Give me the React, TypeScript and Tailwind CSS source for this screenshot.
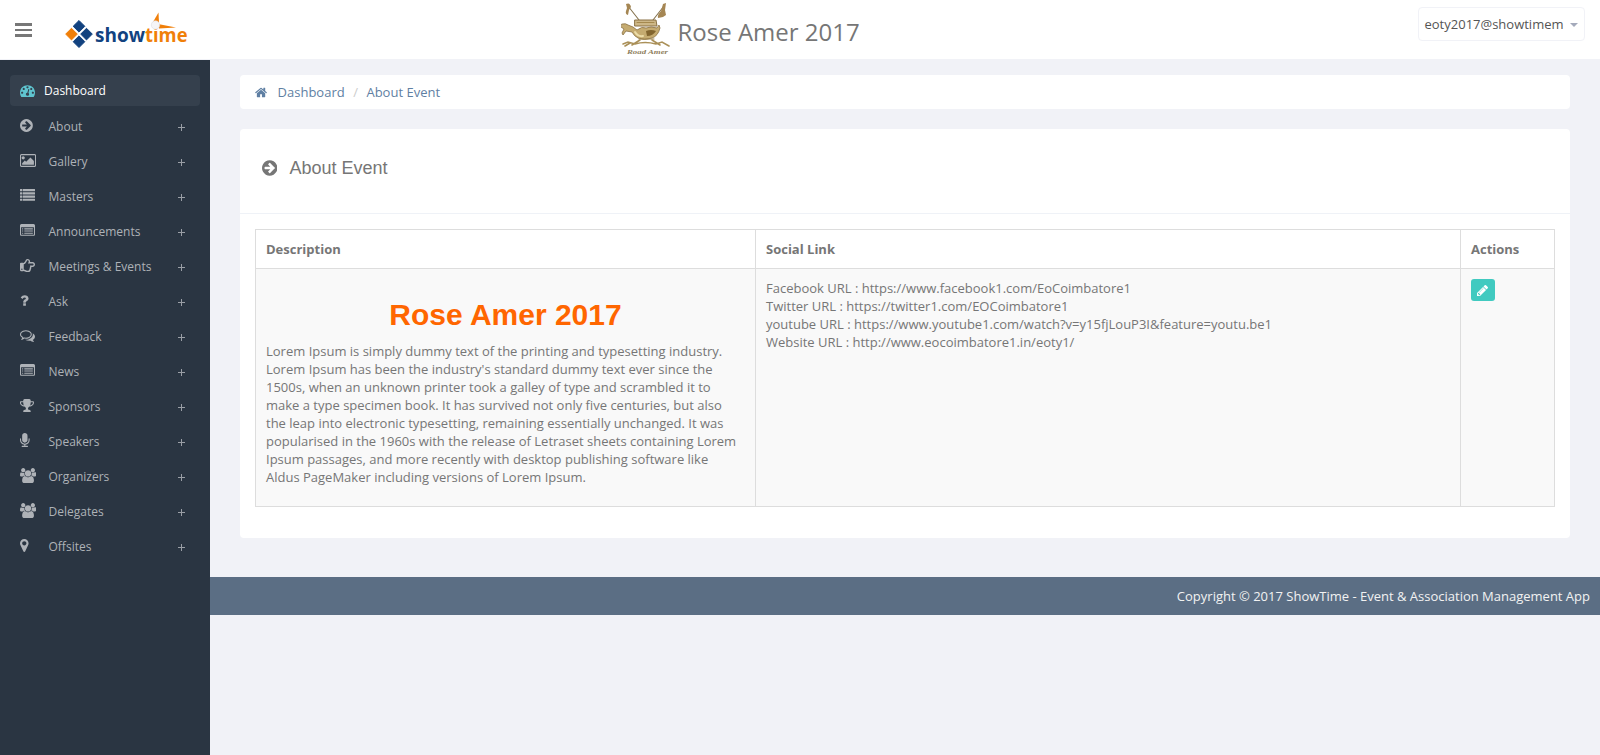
import React from "react";
import { FaRegHandPointRight } from "react-icons/fa";

type Glyph = { box: string; d: string };

const listBar = (y: number) =>
  `M0 ${y + 32}q0-32 32-32h192q32 0 32 32v192q0 32-32 32h-192q-32 0-32-32zM320 ${y + 32}q0-32 32-32h1408q32 0 32 32v192q0 32-32 32h-1408q-32 0-32-32z`;
const altBar = (y: number) => `M256 ${y}h128v128h-128zM512 ${y}h1024v128h-1024z`;

const glyphs: Record<string, Glyph> = {
  dash: { box: "0 0 1792 1792", d: "M384 1152q0-53-37.5-90.5t-90.5-37.5-90.5 37.5-37.5 90.5 37.5 90.5 90.5 37.5 90.5-37.5 37.5-90.5zm192-448q0-53-37.5-90.5t-90.5-37.5-90.5 37.5-37.5 90.5 37.5 90.5 90.5 37.5 90.5-37.5 37.5-90.5zm428 481l101-382q6-26-7.5-48.5t-38.5-29.5-48 6.5-30 39.5l-101 382q-60 5-107 43.5t-63 98.5q-20 77 20 146t117 89 146-20 89-117q16-60-6-117t-72-91zm660-33q0-53-37.5-90.5t-90.5-37.5-90.5 37.5-37.5 90.5 37.5 90.5 90.5 37.5 90.5-37.5 37.5-90.5zm-640-640q0-53-37.5-90.5t-90.5-37.5-90.5 37.5-37.5 90.5 37.5 90.5 90.5 37.5 90.5-37.5 37.5-90.5zm448 192q0-53-37.5-90.5t-90.5-37.5-90.5 37.5-37.5 90.5 37.5 90.5 90.5 37.5 90.5-37.5 37.5-90.5zm320 448q0 261-141 483-19 29-54 29h-1402q-35 0-54-29-141-221-141-483 0-182 71-348t191-286 286-191 348-71 348 71 286 191 191 286 71 348z" },
  arrow: { box: "128 0 1536 1792", d: "M1413 896q0-27-18-45l-91-91-362-362q-18-18-45-18t-45 18l-91 91q-18 18-18 45t18 45l189 189h-502q-26 0-45 19t-19 45v128q0 26 19 45t45 19h502l-189 189q-19 19-19 45t19 45l91 91q18 18 45 18t45-18l362-362 91-91q18-18 18-45zm251 0q0 209-103 385.5t-279.5 279.5-385.5 103-385.5-103-279.5-279.5-103-385.5 103-385.5 279.5-279.5 385.5-103 385.5 103 279.5 279.5 103 385.5z" },
  image: { box: "0 0 1920 1792", d: "M576 576q0 80-56 136t-136 56-136-56-56-136 56-136 136-56 136 56 56 136zm1088 384v448h-1408v-192l320-320 160 160 512-512zm96-704h-1600q-13 0-22.5 9.5t-9.5 22.5v1216q0 13 9.5 22.5t22.5 9.5h1600q13 0 22.5-9.5t9.5-22.5v-1216q0-13-9.5-22.5t-22.5-9.5zm160 32v1216q0 66-47 113t-113 47h-1600q-66 0-113-47t-47-113v-1216q0-66 47-113t113-47h1600q66 0 113 47t47 113z" },
  list: { box: "0 0 1792 1792", d: listBar(128) + listBar(512) + listBar(896) + listBar(1280) },
  listAlt: { box: "0 0 1792 1792", d: altBar(640) + altBar(896) + altBar(1152) + "M1664 1376v-832q0-13-9.5-22.5t-22.5-9.5h-1472q-13 0-22.5 9.5t-9.5 22.5v832q0 13 9.5 22.5t22.5 9.5h1472q13 0 22.5-9.5t9.5-22.5zm128-1088v1088q0 66-47 113t-113 47h-1472q-66 0-113-47t-47-113v-1088q0-66 47-113t113-47h1472q66 0 113 47t47 113z" },
  question: { box: "384 0 1024 1792", d: "M1088 1256v240q0 16-12 28t-28 12h-240q-16 0-28-12t-12-28v-240q0-16 12-28t28-12h240q16 0 28 12t12 28zm316-600q0 54-15.5 101t-35 76.5-55 59.5-57.5 43.5-61 35.5q-41 23-68.5 65t-27.5 67q0 17-12 32.5t-28 15.5h-240q-15 0-25.5-18.5t-10.5-37.5v-45q0-83 65-156.5t143-108.5q59-27 84-56t25-76q0-42-46.5-74t-107.5-32q-65 0-108 29-35 25-107 115-13 16-31 16-12 0-25-8l-164-125q-13-10-15.5-25t5.5-28q160-266 464-266 80 0 161 31t146 83 106 127.5 41 158.5z" },
  comments: { box: "0 0 1792 1792", d: "M704 384q-153 0-286 52t-211.5 141-78.5 191q0 82 53 158t149 132l97 56-35 84q34-20 62-39l44-31 53 10q78 14 153 14 153 0 286-52t211.5-141 78.5-191-78.5-191-211.5-141-286-52zm0-128q191 0 353.5 68.5t256.5 186.5 94 257-94 257-256.5 186.5-353.5 68.5q-86 0-176-16-124 88-278 128-36 9-86 16h-3q-11 0-20.5-8t-11.5-21q-1-3-1-6.5t.5-6.5 2-6l2.5-5 3.5-5.5 4-5 4.5-5 4-4.5q5-6 23-25t26-29.5 22.5-29 25-38.5 20.5-44q-124-72-195-177t-71-224q0-139 94-257t256.5-186.5 353.5-68.5zm822 1169q10 24 20.5 44t25 38.5 22.5 29 26 29.5 23 25q1 1 4 4.5t4.5 5 4 5 3.5 5.5l2.5 5 2 6 .5 6.5-1 6.5q-3 14-13 22t-22 7q-50-7-86-16-154-40-278-128-90 16-176 16-271 0-472-132 58 4 88 4 161 0 309-45t264-129q125-92 192-212t67-254q0-77-23-152 129 71 204 178t75 230q0 120-71 224.5t-195 176.5z" },
  trophy: { box: "64 0 1664 1792", d: "M522 883q-74-162-74-371h-256v96q0 78 94.5 162t235.5 113zm1078-275v-96h-256q0 209-74 371 141-29 235.5-113t94.5-162zm128-128v128q0 71-41.5 143t-112 130-173 97.5-215.5 44.5q-42 54-95 95-38 34-52.5 72.5t-14.5 89.5q0 54 30.5 91t97.5 37q75 0 133.5 45.5t58.5 114.5v64q0 14-9 23t-23 9h-832q-14 0-23-9t-9-23v-64q0-69 58.5-114.5t133.5-45.5q67 0 97.5-37t30.5-91q0-51-14.5-89.5t-52.5-72.5q-53-41-95-95-113-5-215.5-44.5t-173-97.5-112-130-41.5-143v-128q0-40 28-68t68-28h288v-96q0-66 47-113t113-47h576q66 0 113 47t47 113v96h288q40 0 68 28t28 68z" },
  mic: { box: "320 0 1152 1792", d: "M1472 704v128q0 221-147.5 384.5t-364.5 187.5v132h256q26 0 45 19t19 45-19 45-45 19h-640q-26 0-45-19t-19-45 19-45 45-19h256v-132q-217-24-364.5-187.5t-147.5-384.5v-128q0-26 19-45t45-19 45 19 19 45v128q0 185 131.5 316.5t316.5 131.5 316.5-131.5 131.5-316.5v-128q0-26 19-45t45-19 45 19 19 45zm-256-384v512q0 132-94 226t-226 94-226-94-94-226v-512q0-132 94-226t226-94 226 94 94 226z" },
  users: { box: "0 0 1920 1792", d: "M593 896q-162 5-265 128h-134q-82 0-138-40.5t-56-118.5q0-353 124-353 6 0 43.5 21t97.5 42.5 119 21.5q67 0 133-23-5 37-5 66 0 159 93 286zm1071 637q0 120-73 189.5t-194 69.5h-874q-121 0-194-69.5t-73-189.5q0-53 3.5-103.5t14-109 26.5-108.5 43-97.5 62-81 85.5-53.5 111.5-20q10 0 43 21.5t73 48 107 48 135 21.5 135-21.5 107-48 73-48 43-21.5q61 0 111.5 20t85.5 53.5 62 81 43 97.5 26.5 108.5 14 109 3.5 103.5zm-1024-1277q0 106-75 181t-181 75-181-75-75-181 75-181 181-75 181 75 75 181zm704 384q0 159-112.5 271.5t-271.5 112.5-271.5-112.5-112.5-271.5 112.5-271.5 271.5-112.5 271.5 112.5 112.5 271.5zm576 225q0 78-56 118.5t-138 40.5h-134q-103-123-265-128 93-127 93-286 0-29-5-66 66 23 133 23 59 0 119-21.5t97.5-42.5 43.5-21q124 0 124 353zm-128-609q0 106-75 181t-181 75-181-75-75-181 75-181 181-75 181 75 75 181z" },
  marker: { box: "384 0 1024 1792", d: "M1152 640q0-106-75-181t-181-75-181 75-75 181 75 181 181 75 181-75 75-181zm256 0q0 109-33 179l-364 774q-16 33-47.5 52t-67.5 19-67.5-19-46.5-52l-365-774q-33-70-33-179 0-212 150-362t362-150 362 150 150 362z" },
  home: { box: "64 0 1664 1792", d: "M1472 992v480q0 26-19 45t-45 19h-384v-384h-256v384h-384q-26 0-45-19t-19-45v-480q0-1 .5-3t.5-3l575-474 575 474q1 2 1 6zm223-69l-62 74q-8 9-21 11h-3q-13 0-21-7l-692-577-692 577q-12 8-24 7-13-2-21-11l-62-74q-8-10-7-23.5t11-21.5l719-599q32-26 76-26t76 26l244 204v-195q0-14 9-23t23-9h192q14 0 23 9t9 23v408l219 182q10 8 11 21.5t-7 23.5z" },
  pencil: { box: "128 0 1536 1792", d: "M491 1536l91-91-235-235-91 91v107h128v128h107zm523-928q0-22-22-22-10 0-17 7l-542 542q-7 7-7 17 0 22 22 22 10 0 17-7l542-542q7-7 7-17zm-54-192l416 416-832 832h-416v-416zm683 96q0 53-37 90l-166 166-416-416 166-165q36-38 90-38 53 0 91 38l235 234q37 39 37 91z" },
};

function Icon({ name, className }: { name: string; className: string }) {
  const g = glyphs[name];
  return (
    <svg viewBox={g.box} className={`w-auto shrink-0 fill-current ${className}`} fillRule="evenodd">
      <path d={g.d} />
    </svg>
  );
}

const menu: [string, string][] = [
  ["arrow", "About"],
  ["image", "Gallery"],
  ["list", "Masters"],
  ["listAlt", "Announcements"],
  ["hand", "Meetings & Events"],
  ["question", "Ask"],
  ["comments", "Feedback"],
  ["listAlt", "News"],
  ["trophy", "Sponsors"],
  ["mic", "Speakers"],
  ["users", "Organizers"],
  ["users", "Delegates"],
  ["marker", "Offsites"],
];

function ShowtimeLogo() {
  return (
    <svg viewBox="0 0 126 40" className="ml-[31px] h-10 w-[126px]">
      <g strokeWidth="1" strokeLinejoin="round">
        <path d="M16 10.500l5.800 5.800-5.800 5.800-5.800-5.800z" fill="#12427f" stroke="#12427f" />
        <path d="M8.500 18.300l5.800 5.800-5.800 5.800-5.800-5.800z" fill="#f07f09" stroke="#f07f09" />
        <path d="M23.500 18.300l5.800 5.800-5.800 5.800-5.800-5.800z" fill="#12427f" stroke="#12427f" />
        <path d="M16 25.900l5.800 5.800-5.800 5.800-5.800-5.800z" fill="#12427f" stroke="#12427f" />
      </g>
      <text x="32" y="31.500" fontFamily="'Open Sans'" fontWeight="700" fontSize="19" fill="#12427f" textLength="50" lengthAdjust="spacingAndGlyphs">show</text>
      <text x="82" y="31.500" fontFamily="'Open Sans'" fontWeight="700" fontSize="19" fill="#f07f09" textLength="42.500" lengthAdjust="spacingAndGlyphs">time</text>
      <path d="M90 12L95.500 2.500 96 13z" fill="#f07f09" />
      <path d="M95 14l18 3.500-17 1z" fill="#f07f09" />
      <circle cx="92.500" cy="15" r="4.200" fill="#f5f5f7" stroke="#dcdce0" strokeWidth=".6" />
    </svg>
  );
}

function Crest() {
  return (
    <svg viewBox="0 0 50 56" className="h-[56px] w-[50px]" fill="none" strokeLinecap="round">
      <path d="M7 4l11 14M43 4L32 18" stroke="#85734f" strokeWidth="1.100" />
      <path d="M5 2q4-2 5 3l-2 3-1 5q-3-1-2-4l1-3zM42 2l3-1-1 7 1 5-3 2-5 1q-1-3 3-7z" fill="#a58653" />
      <path d="M14 18h21l1 6H14z" fill="#cdb787" stroke="#8a7144" />
      <path d="M16 20.500h17" stroke="#a5894f" />
      <path d="M1 22q4-1 6 1l5 2 4 3q5-4 9-2 5-2 11 0l2-3 1 3q-2 8-8 10-8 3-14 0-4-2-6-6l-6-1-3 4-1-2 2-4-3-2z" fill="#c5ab70" stroke="#8a7144" strokeWidth=".8" />
      <path d="M14 30q3 5 8 4" stroke="#ecdca8" strokeWidth="2" />
      <path d="M25 29q5-2 10 0-3 5-9 5z" fill="#82652f" />
      <path d="M18 37h15" stroke="#9c834e" />
      <path d="M2 42l5-2 7 2q10-3 21 0l6-2 7 4M4 44l5-3M11 43l8-5M39 43l-8-5" stroke="#aa9058" strokeWidth="1.600" />
      <text x="6" y="51.500" fontFamily="'Liberation Serif'" fontWeight="700" fontStyle="italic" fontSize="5.500" fill="#8f8060" textLength="41" lengthAdjust="spacingAndGlyphs">Road  Amer</text>
    </svg>
  );
}

function Sidebar() {
  return (
    <aside className="w-[210px] shrink-0 bg-[#2a3542] px-2.5 pt-[15px] text-xs">
      <div className="flex h-[31px] items-center rounded bg-[#35404d] pl-2.5 text-white">
        <Icon name="dash" className="h-[15px] text-[#5fc4cf]" />
        <span className="ml-[9px]">Dashboard</span>
      </div>
      <ul className="mt-[3px]">
        {menu.map(([icon, label]) => (
          <li key={label} className="flex h-[35px] items-center pl-2.5 text-[#aeb2b7]">
            <span className="mb-[3px] w-[28.5px]">
              {icon === "hand" ? <FaRegHandPointRight className="size-[15px]" /> : <Icon name={icon} className="h-[15px]" />}
            </span>
            <span className="grow">{label}</span>
            <svg viewBox="0 0 7 7" className="mr-[15px] mt-px size-[7px] text-[#9a9fa6]" stroke="currentColor">
              <path d="M0 3.500h7M3.500 0v7" />
            </svg>
          </li>
        ))}
      </ul>
    </aside>
  );
}

export default function App() {
  return (
    <div className="flex h-[755px] flex-col bg-[#f1f2f7] font-['Open_Sans',sans-serif] text-[13px] leading-[18px] text-[#767676]">
      <header className="flex h-[60px] shrink-0 items-start border-b border-[#f1f2f7] bg-white">
        <div className="ml-[15px] mt-[23px] flex w-[17px] flex-col gap-[3px]">
          <i className="h-[2.5px] bg-[#777]" />
          <i className="h-[2.5px] bg-[#777]" />
          <i className="h-[2.5px] bg-[#777]" />
        </div>
        <div className="w-[573px] pt-[10px]"><ShowtimeLogo /></div>
        <div className="ml-[16px] flex items-start pt-0.5">
          <Crest />
          <span className="ml-[6.5px] pt-3.5 text-2xl leading-8">Rose Amer 2017</span>
        </div>
        <div className="ml-auto mr-[15px] mt-[7px] flex h-[34px] w-[167px] items-center rounded border border-[#f1f2f7] pl-[5.5px] text-[#555]">
          <span>eoty2017@showtimem</span>
          <i className="ml-1.5 mt-0.5 border-x-4 border-t-4 border-x-transparent border-t-[#a4aabb]" />
        </div>
      </header>
      <div className="flex grow">
        <Sidebar />
        <main className="flex grow flex-col">
          <nav className="mx-[30px] mt-[15px] flex h-[34px] items-center rounded bg-white pl-[15px] text-[#5f7fa3]">
            <Icon name="home" className="h-[13px]" />
            <span className="ml-[10.5px]">Dashboard</span>
            <span className="mx-[8.5px] text-[#ccc]">/</span>
            <span>About Event</span>
          </nav>
          <section className="mx-[30px] mt-5 h-[409px] rounded bg-white">
            <div className="flex h-[85px] items-center border-b border-[#eff2f7] pb-1.5 pl-[22px] font-['Liberation_Sans',sans-serif] text-lg">
              <Icon name="arrow" className="h-[18px]" />
              <h3 className="ml-3">About Event</h3>
            </div>
            <table className="ml-[15px] mt-[15px] w-[1300px] table-fixed border-collapse">
              <colgroup>
                <col className="w-[500px]" />
                <col className="w-[705px]" />
                <col className="w-[94px]" />
              </colgroup>
              <thead>
                <tr className="h-[39px] text-left font-semibold">
                  <th className="border border-[#ddd] px-2.5">Description</th>
                  <th className="border border-[#ddd] px-2.5">Social Link</th>
                  <th className="border border-[#ddd] px-2.5">Actions</th>
                </tr>
              </thead>
              <tbody>
                <tr className="h-[238px] bg-[#f9f9f9] align-top">
                  <td className="border border-[#ddd] px-2.5 pt-[29px]">
                    <h1 className="mb-[11px] text-center font-['Liberation_Sans',sans-serif] text-[30px] font-bold leading-[33px] text-[#ff6600]">Rose Amer 2017</h1>
                    <p>
                      Lorem Ipsum is simply dummy text of the printing and typesetting industry. Lorem Ipsum has been the industry's standard dummy text ever since the 1500s, when an unknown printer took a galley of type and scrambled it to make a type specimen book. It has survived not only five centuries, but also the leap into electronic typesetting, remaining essentially unchanged. It was popularised in the 1960s with the release of Letraset sheets containing Lorem Ipsum passages, and more recently with desktop publishing software like Aldus PageMaker including versions of Lorem Ipsum.
                    </p>
                  </td>
                  <td className="border border-[#ddd] px-2.5 pt-2.5">
                    <p>Facebook URL : https://www.facebook1.com/EoCoimbatore1</p>
                    <p>Twitter URL : https://twitter1.com/EOCoimbatore1</p>
                    <p>youtube URL : https://www.youtube1.com/watch?v=y15fjLouP3I&amp;feature=youtu.be1</p>
                    <p>Website URL : http://www.eocoimbatore1.in/eoty1/</p>
                  </td>
                  <td className="border border-[#ddd] px-2.5 pt-2.5">
                    <button className="flex h-[22px] w-6 items-center justify-center rounded-[3px] bg-[#41cac0] text-white">
                      <Icon name="pencil" className="h-[13px]" />
                    </button>
                  </td>
                </tr>
              </tbody>
            </table>
          </section>
          <footer className="mt-[39px] flex h-[38px] items-center justify-end bg-[#5b6e84] pr-2.5 text-[#f2f2f2]">
            Copyright © 2017 ShowTime - Event &amp; Association Management App
          </footer>
        </main>
      </div>
    </div>
  );
}
